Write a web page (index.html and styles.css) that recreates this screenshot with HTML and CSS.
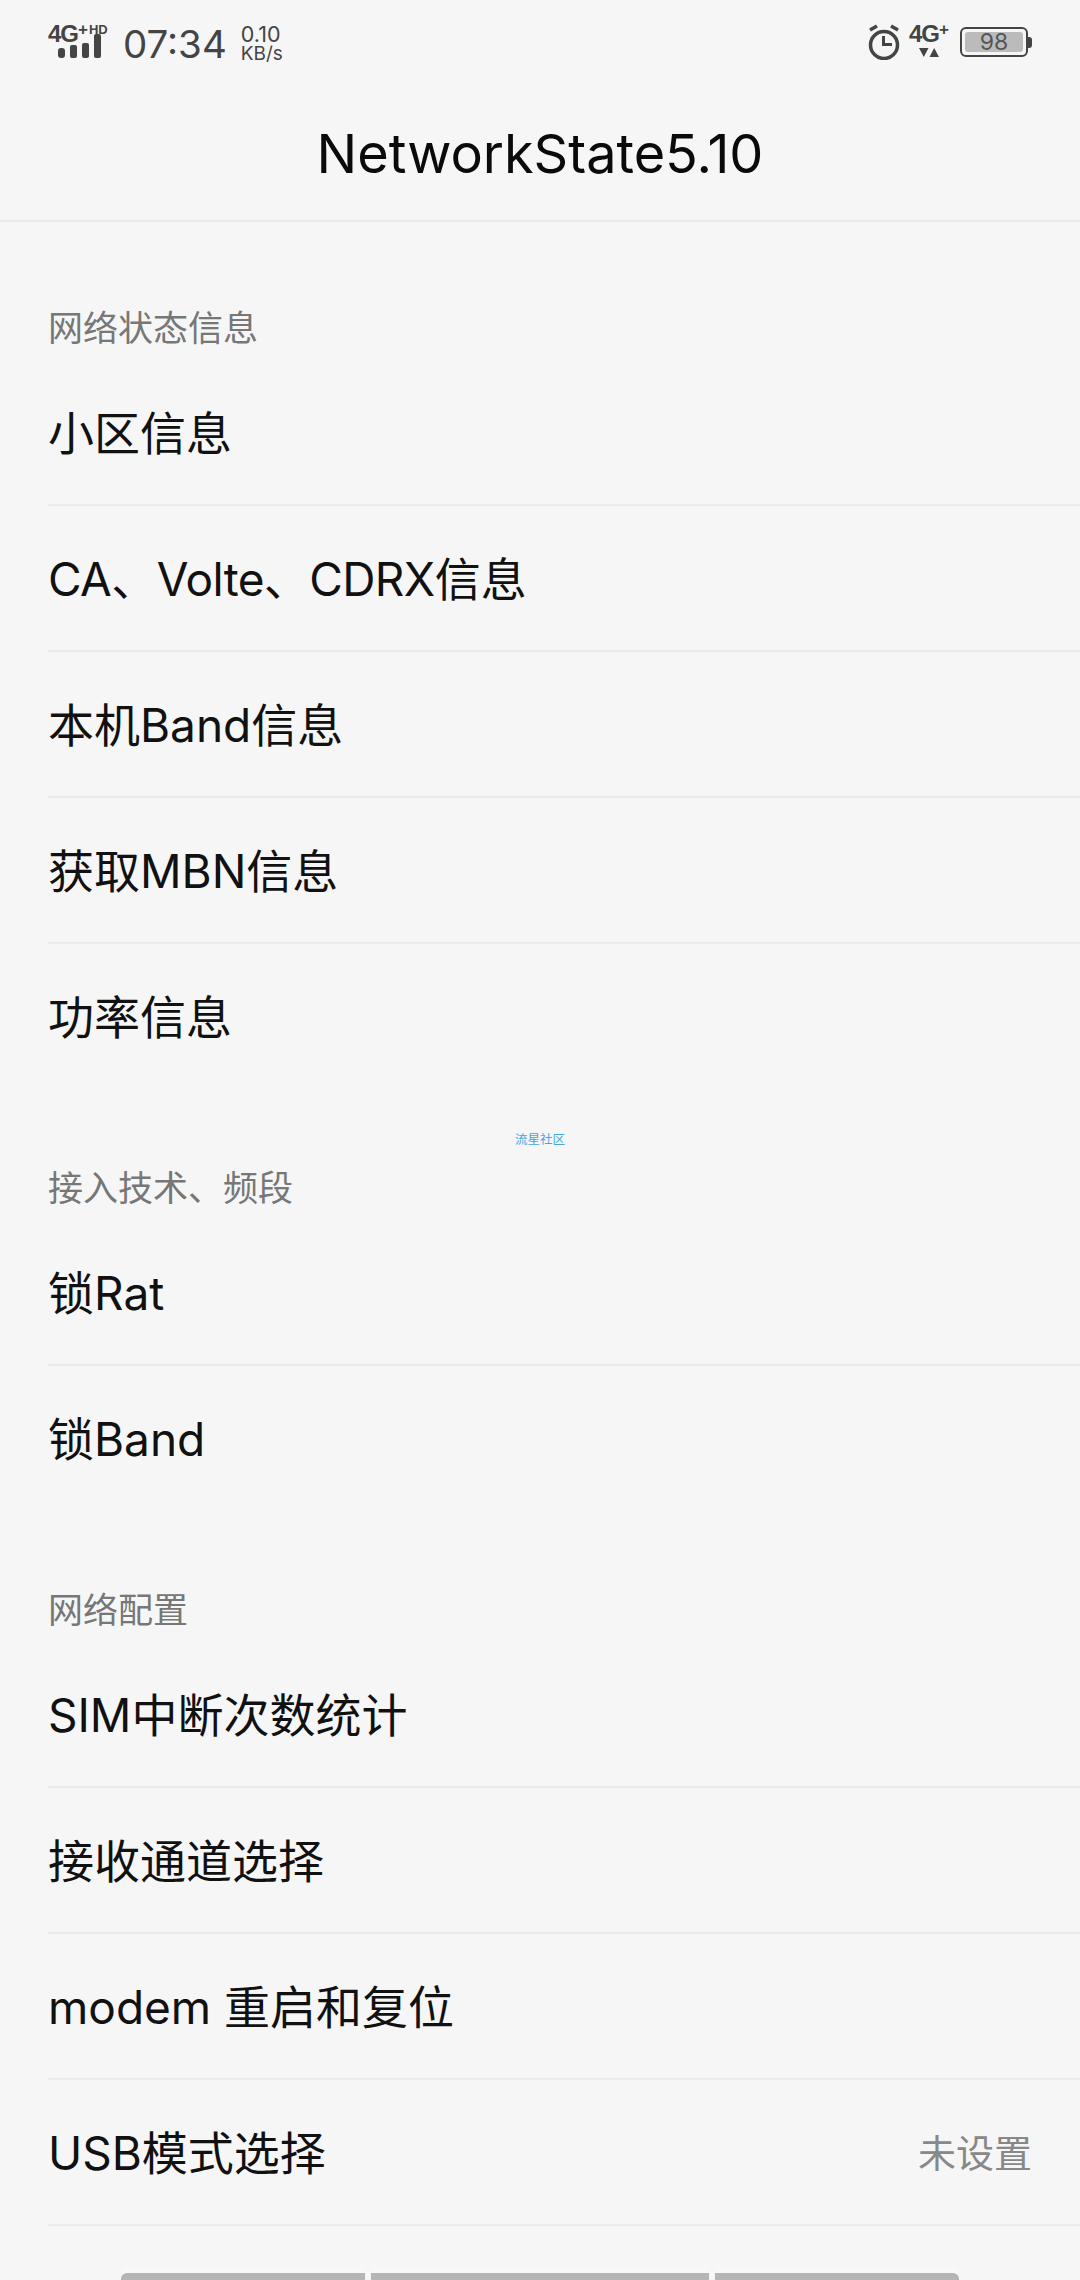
FILE: index.html

```html
<!DOCTYPE html>
<html lang="zh">
<head>
  <meta charset="UTF-8">
  <meta name="viewport" content="width=device-width, initial-scale=1">
  <title>NetworkState5.10</title>
  <link rel="stylesheet" href="styles.css">
</head>
<body>
  <div class="page">
    <div class="status-bar">
      <div class="status-left">
        <div class="signal">
          <div class="net-label">4G<span class="net-plus">+</span><span class="net-hd">HD</span></div>
          <svg class="signal-bars" width="44" height="24" viewBox="0 0 44 24">
            <rect x="0" y="14" width="7" height="10" rx="3" />
            <rect x="12" y="11" width="7" height="13" rx="2" />
            <rect x="24" y="9" width="7" height="15" rx="2" />
            <rect x="36" y="0" width="7" height="24" rx="2" />
          </svg>
        </div>
        <span class="clock">07:34</span>
        <div class="speed"><span>0.10</span><span class="speed-unit">KB/s</span></div>
      </div>
      <div class="status-right">
        <svg class="alarm" width="32" height="36" viewBox="0 0 32 36">
          <circle cx="16" cy="21" r="13.5" fill="none" stroke="#444" stroke-width="3.5" />
          <path d="M15.5 12v8.5h8.5" fill="none" stroke="#444" stroke-width="3" />
          <path d="M2 6l7-4M30 6l-7-4" fill="none" stroke="#444" stroke-width="3.5" />
        </svg>
        <div class="net-small">
          <div class="net-small-label">4G<span class="net-plus">+</span></div>
          <svg width="20" height="9" viewBox="0 0 20 9">
            <path d="M0 0h9.5L4.8 9zM10.5 9H20L15.2 0z" fill="#444" />
          </svg>
        </div>
        <div class="battery">
          <div class="battery-body"><div class="battery-fill">98</div></div>
          <div class="battery-nub"></div>
        </div>
      </div>
    </div>

    <div class="title-bar">NetworkState5.10</div>

    <div class="list">
      <div class="section first">
        <div class="section-label">网络状态信息</div>
        <div class="row">小区信息</div>
        <div class="row"><span class="row-tight">CA、Volte、CDRX</span>信息</div>
        <div class="row">本机Band信息</div>
        <div class="row">获取MBN信息</div>
        <div class="row">功率信息</div>
      </div>
      <div class="section">
        <div class="section-label">接入技术、频段</div>
        <div class="row">锁Rat</div>
        <div class="row">锁Band</div>
      </div>
      <div class="section">
        <div class="section-label">网络配置</div>
        <div class="row">SIM中断次数统计</div>
        <div class="row">接收通道选择</div>
        <div class="row">modem 重启和复位</div>
        <div class="row line-last"><span>USB模式选择</span><span class="row-value">未设置</span></div>
      </div>
    </div>

    <div class="watermark">流星社区</div>

    <div class="tabs">
      <div class="tab tab-left"></div>
      <div class="tab tab-mid"></div>
      <div class="tab tab-right"></div>
    </div>
  </div>
</body>
</html>
```

FILE: styles.css

```css
* { box-sizing: border-box; }
html, body { margin: 0; padding: 0; }
body { background: #f6f6f6; font-family: Inter, "Noto Sans CJK SC", sans-serif; }

.page { position: relative; width: 1080px; height: 2280px; display: flex; flex-direction: column; overflow: hidden; }

.status-bar { height: 82px; padding: 20px 48px 0; display: flex; justify-content: space-between; align-items: flex-start; color: #444; }
.status-left { display: flex; align-items: flex-start; }
.status-right { display: flex; align-items: flex-start; margin-top: 4px; }

.signal { width: 64px; margin: 5px 11px 0 0; }
.net-label { font-family: "Liberation Sans", sans-serif; font-weight: bold; font-size: 24px; line-height: 17px; height: 17px; letter-spacing: -1px; white-space: nowrap; }
.net-plus { font-size: 17px; line-height: 0; vertical-align: 7px; letter-spacing: 0; }
.net-hd { font-size: 13px; line-height: 0; vertical-align: 8px; letter-spacing: 0; margin-left: 1px; }
.signal-bars { display: block; margin: -8px 0 0 10px; fill: #444; }

.clock { font-size: 38.5px; line-height: 46px; margin: 1px 14px 0 0; }
.speed { display: flex; flex-direction: column; font-size: 21.5px; line-height: 20px; margin-top: 4px; }
.speed-unit { font-size: 19px; line-height: 20px; }

.alarm { margin-right: 9px; }
.net-small { width: 45px; margin: -1px 6px 0 0; }
.net-small-label { font-family: "Liberation Sans", sans-serif; font-weight: bold; font-size: 24px; line-height: 22px; letter-spacing: -1px; white-space: nowrap; }
.net-small svg { display: block; margin: 3px 0 0 10px; }

.battery { display: flex; align-items: center; margin-top: 3px; }
.battery-body { width: 68px; height: 30px; border: 2px solid #444; border-radius: 6px; padding: 3px; }
.battery-fill { height: 20px; background: #bbb; border-radius: 3px; color: #555; font-size: 23px; line-height: 21px; text-align: center; }
.battery-nub { width: 4px; height: 11px; background: #444; border-radius: 0 3px 3px 0; }

.title-bar { height: 140px; padding-top: 4px; border-bottom: 2px solid #ebebeb; font-size: 54px; display: flex; align-items: center; justify-content: center; color: #0a0a0a; }

.list { flex: 1; }
.section { padding-top: 74px; }
.section.first { padding-top: 82px; }
.section-label { font-size: 35px; line-height: 48px; height: 56px; color: #777; padding-left: 48px; }
.row { margin-left: 48px; height: 146px; padding: 0 48px 4px 0; border-bottom: 2px solid #ebebeb; font-size: 46px; color: #111; display: flex; align-items: center; justify-content: flex-start; }
.section .row:last-child { border-bottom-color: transparent; }
.section .row.line-last { border-bottom-color: #ebebeb; justify-content: space-between; }
.row-tight { letter-spacing: -0.6px; }
.row-value { font-size: 38px; color: #888; }

.watermark { position: absolute; top: 1132px; left: 0; width: 100%; text-align: center; font-size: 12.5px; line-height: 16px; color: #45a6e2; }

.tabs { height: 7px; display: flex; justify-content: center; gap: 6px; }
.tab { height: 7px; background: #b5b5b5; box-shadow: 0 -6px 6px rgba(255, 255, 255, 0.35); }
.tab-left { width: 244px; border-radius: 6px 0 0 0; }
.tab-mid { width: 338px; }
.tab-right { width: 244px; border-radius: 0 6px 0 0; }
```
